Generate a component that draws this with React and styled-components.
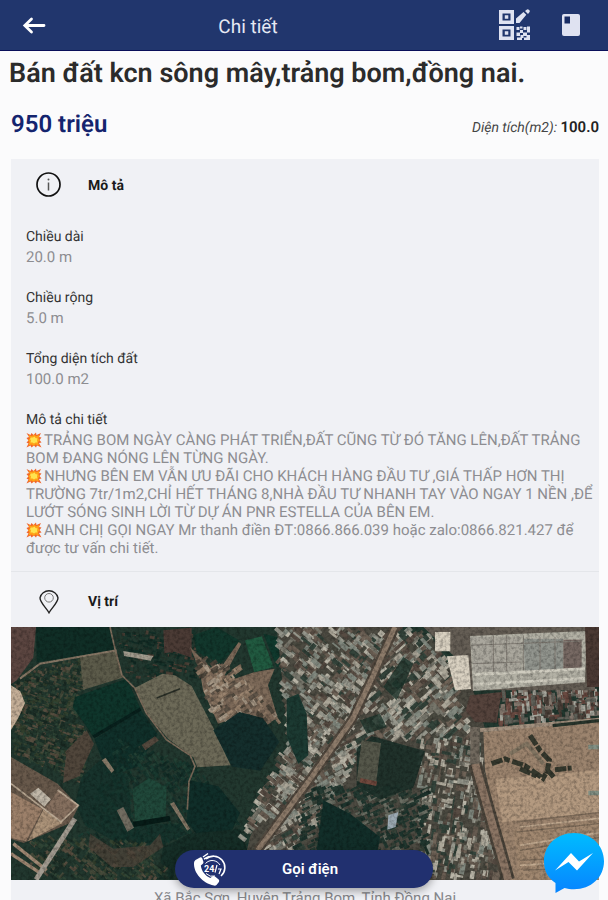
import React from "react";
import styled, { createGlobalStyle } from "styled-components";

const GlobalStyle = createGlobalStyle`
  body {
    margin: 0;
    background: #fbfbfc;
    font-family: Roboto, "Noto Sans", sans-serif;
    text-rendering: geometricPrecision;
  }
  * {
    box-sizing: border-box;
  }
`;

const Screen = styled.div`
  position: relative;
  height: 100vh;
  display: flex;
  flex-direction: column;
  overflow: hidden;
`;

const Header = styled.header`
  flex: none;
  height: 51px;
  padding: 0 20px;
  display: flex;
  align-items: center;
  justify-content: space-between;
  background: #21366d;
  border-bottom: 1px solid #0a0f5a;
`;

const HeaderSide = styled.div`
  flex: 1;
  display: flex;
  align-items: center;
  justify-content: ${props => (props.$end ? "flex-end" : "flex-start")};
  gap: 24px;
`;

const HeaderTitle = styled.h1`
  margin: 0;
  padding: 4px 112px 0 0;
  color: #e6e9f4;
  font-size: 19px;
  font-weight: 400;
  line-height: 24px;
`;

const IconButton = styled.button`
  display: flex;
  padding: 0;
  border: none;
  background: none;
  cursor: pointer;
`;

const Content = styled.main`
  flex: 1;
  min-height: 0;
  overflow-y: auto;
  padding: 4px 9px 0 11px;
  scrollbar-width: none;
`;

const Title = styled.h2`
  margin: 0 0 16px -2px;
  color: #2b2b2b;
  font-size: 27px;
  font-weight: 600;
  line-height: 36px;
`;

const Summary = styled.div`
  display: flex;
  align-items: center;
  justify-content: space-between;
  margin-bottom: 18px;
`;

const Price = styled.strong`
  color: #14246e;
  font-size: 24px;
  font-weight: 600;
  line-height: 34px;
`;

const Area = styled.span`
  padding-top: 6px;
  color: #444;
  font-size: 14px;
  font-style: italic;

  strong {
    color: #222;
    font-size: 15px;
    font-style: normal;
    font-weight: 600;
  }
`;

const Card = styled.section`
  background: #f0f1f5;
`;

const SectionHead = styled.div`
  display: flex;
  align-items: center;
  gap: 26px;
  height: ${props => (props.$divided ? 56 : 52)}px;
  padding: ${props => (props.$divided ? "2px 0 0 25px" : "0 0 0 25px")};
  border-top: ${props => (props.$divided ? "1px solid #e4e6ea" : "none")};
`;

const SectionName = styled.h3`
  margin: 0;
  padding-top: 2px;
  color: #1a1a1a;
  font-size: 14px;
  font-weight: 700;
`;

const Details = styled.dl`
  margin: 0;
  padding: 15px 4px 14px 15px;
`;

const Label = styled.dt`
  color: #333;
  font-size: 14px;
  line-height: 22px;
`;

const Value = styled.dd`
  margin: 0 0 21px;
  color: #8d8d91;
  font-size: 15px;
  line-height: 18px;

  &:last-child {
    margin-bottom: 0;
  }
`;

const Line = styled.p`
  margin: 0;
`;

const Emoji = styled.svg`
  width: 16px;
  height: 16px;
  margin-right: 2px;
  vertical-align: -3px;
`;

const MapImage = styled.svg`
  display: block;
  width: 100%;
  height: 253px;
`;

const Address = styled.p`
  margin: 0;
  padding: 9px 0 24px;
  color: #85868a;
  font-size: 15px;
  line-height: 18px;
  text-align: center;
`;

const CallButton = styled.button`
  position: absolute;
  left: 50%;
  bottom: 12px;
  width: 258px;
  height: 38px;
  transform: translateX(-50%);
  display: grid;
  grid-template-columns: 34px 1fr;
  align-items: center;
  padding: 0 39px 0 17px;
  border: none;
  border-radius: 19px;
  background: #21306f;
  color: #fff;
  font-family: inherit;
  font-size: 15px;
  font-weight: 600;
  box-shadow: 0 3px 8px rgba(0, 0, 0, 0.35);
  cursor: pointer;
`;

const ChatButton = styled(IconButton)`
  position: absolute;
  right: 4px;
  bottom: 6px;
`;

const BackIcon = () => (
  <svg width="28" height="24" viewBox="0 0 28 24" fill="none" stroke="#fff" strokeWidth="2.8" strokeLinecap="round">
    <path d="M24 12.500H5M11.500 6L4.800 12.500l6.700 6.500" />
  </svg>
);

const QrEditIcon = () => (
  <svg width="32" height="32" viewBox="0 0 32 32" fill="#dfe2f1">
    <path fillRule="evenodd" d="M0 1h15v14H0zM3.500 4.500v7h8v-7zM0 17h15v14H0zM3.500 20.500v7h8v-7z" />
    <path d="M5.800 6.300h3.500v3.500H5.800zM5.800 22.300h3.500v3.500H5.800z" />
    <path d="M17 12V9.500L24.500 3l2.800 2.800L20.500 14H17zM26 2l2-1.500q1-.5 1.800.2l.6.6q.8.8.2 1.800L29 5z" />
    <path d="M17.500 18h3v3h-3zM21 21h3v3h-3zM24.500 18h3v3h-3zM28 17.500h3v6h-3zM17.500 23.500h3.500v3.500h-3.500zM24 23.500h4v3.500h-4zM27.500 26h3.500v5h-6v-2.500h2.500zM18 28.500h5v2.500h-5zM21.500 26h3v3h-3zM21 17.500h2.500v2H21z" />
  </svg>
);

const BookIcon = () => (
  <svg width="33" height="24" viewBox="0 0 33 24">
    <rect x="7" y="1" width="18" height="22" rx="2" fill="#dfe2f1" />
    <rect x="9.500" y="3.500" width="5.500" height="7" fill="#182b63" />
  </svg>
);

const InfoIcon = () => (
  <svg width="26" height="26" viewBox="0 0 26 26" fill="none" stroke="#111">
    <circle cx="12.500" cy="12.500" r="11.500" strokeWidth="1.700" />
    <path d="M12.500 10.500v8" stroke="#555" strokeWidth="1.500" />
    <circle cx="12.500" cy="7.500" r="1" fill="#555" stroke="none" />
  </svg>
);

const PinIcon = () => (
  <svg width="26" height="26" viewBox="0 0 26 26" fill="none" stroke="#222">
    <path d="M13 24.800C10.500 20 4 14.800 4 9.800a9.200 8.800 0 0 1 18 0c0 5-6.500 10.200-9 15z" strokeWidth="1.400" />
    <circle cx="13" cy="9.800" r="4.300" stroke="#777" />
  </svg>
);

const Burst = () => (
  <Emoji viewBox="0 0 32 32" role="img" aria-label="💥">
    <path
      d="M1 2l8 4 2-4 4 4 5-5 1 5 9-4-4 8 5 1-4 5 4 5-5 1 5 9-9-4-2 4-4-4-5 4-2-4-8 4 4-8-4-2 4-4-4-5 5-2z"
      fill="#f0652a"
    />
    <path d="M5 6l7 2 4-3 4 3 7-2-2 7 3 4-4 3 2 7-7-2-4 3-4-3-6 2 2-7-3-4 4-3z" fill="#ffa016" />
    <path d="M10 11l4 0 3-2 2 3 4 1-1 4 1 4-4 0-3 2-3-2-4 0 1-4-2-3z" fill="#ffe34f" />
  </Emoji>
);

const PhoneIcon = () => (
  <svg width="34" height="34" viewBox="0 0 34 34" fill="none">
    <path
      d="M3.500 8L8 5.500q1.400-.6 2.200.7l1.200 3.600q.4 1.400-.8 2.300l-1.800 1.500c.7 5.600 4.500 10.500 9.500 12.300l2.300-1.600q1.300-.6 2.400.3l3.700 3q1 1.100.2 2.300l-2.400 3q-1 1-2.500.7C10.500 31 1.500 21 2 11q.1-2.200 1.500-3z"
      fill="#fff"
    />
    <path d="M11 5l5-3.500M12 7l5-2.500" stroke="#fff" strokeWidth="1.500" />
    <path d="M14 7A11 11 0 1 1 29 24" stroke="#fff" strokeWidth="1.600" />
    <path d="M13.500 11.500a9 9 0 0 1 14.500 1.500M14 21.500q4 4 9 2.500" stroke="#fff" strokeWidth="1" />
    <text x="12" y="20" fill="#fff" fontSize="9" fontWeight="700">24</text>
    <path d="M25 13l-2 7.500M26 17h3l-2 5" stroke="#fff" strokeWidth="1.200" />
  </svg>
);

const MessengerIcon = () => (
  <svg width="60" height="62" viewBox="0 0 60 62">
    <defs>
      <linearGradient id="chat" x1="0" y1="0" x2="0" y2="1">
        <stop offset="0" stopColor="#00bcff" />
        <stop offset="1" stopColor="#0784ff" />
      </linearGradient>
    </defs>
    <path d="M30 1C13 1 0 13 0 29.500c0 9.500 4 16.500 11.500 21.500v10l9-5c3 .9 6 1.300 9.500 1.300 17 0 30-11.800 30-28S47 1 30 1z" fill="url(#chat)" />
    <path d="M11 38.500L27 21l8 8.500L49 21 33 38.500l-8.500-8.500z" fill="#fff" />
  </svg>
);

// small seeded generator so the roofs land on the same spots each render
const seeded = seed => () => {
  seed = (seed * 16807) % 2147483647;
  return seed / 2147483647;
};

const roofColors = ["#95968b", "#77766b", "#aba698", "#665b50", "#82897f", "#b9b5a7", "#574c43", "#34443b", "#6f6357", "#4a4a40"];
const treeColors = ["#23382e", "#2f4435", "#564d3f", "#1c2e26", "#454a3a", "#34422f"];

// corners: top-left, top-right, bottom-right, bottom-left
const scatter = (seed, count, corners, angle, size, colors) => {
  const next = seeded(seed * 7919);
  const [a, b, c, d] = corners;
  return Array.from({ length: count }, () => {
    const u = next();
    const v = next();
    const mix = i => (a[i] * (1 - u) + b[i] * u) * (1 - v) + (d[i] * (1 - u) + c[i] * u) * v;
    return {
      x: mix(0),
      y: mix(1),
      w: size * (0.6 + next() * 1.6),
      h: size * (0.4 + next() * 0.5),
      turn: angle + (next() > 0.8 ? 90 : 0),
      fill: colors[Math.floor(next() * colors.length)]
    };
  });
};

const orchard = scatter(11, 900, [[50, 170], [250, 110], [250, 490], [45, 400]], 20, 11, treeColors);
const southTrees = scatter(29, 460, [[100, 650], [440, 670], [520, 775], [90, 775]], 40, 12, treeColors);
const centreTrees = scatter(31, 560, [[360, 360], [590, 440], [780, 690], [240, 650]], 55, 12, ["#1a3b31", "#143029", "#234034", "#17322c"]);
const northTrees = scatter(37, 260, [[350, 40], [580, 30], [650, 170], [390, 175]], 10, 11, ["#19342b", "#24372d", "#4b4036", "#122d26"]);

const village = scatter(3, 170, [[590, 110], [710, 140], [850, 310], [640, 310]], -35, 15, ["#8d7864", "#9a846f", "#756455", "#5f5448", "#a99a87", "#4d463b"]);

const roofs = [
  ...scatter(5, 560, [[830, 20], [1170, 20], [1070, 280], [870, 420]], 40, 18, roofColors),
  ...scatter(9, 340, [[860, 370], [1080, 280], [940, 480], [720, 660]], 38, 18, roofColors),
  ...scatter(13, 480, [[1190, 20], [1310, 60], [1420, 350], [1060, 350]], -42, 21, roofColors),
  ...scatter(17, 420, [[1260, 360], [1430, 350], [1510, 775], [1260, 775]], -80, 17, roofColors),
  ...scatter(19, 220, [[1510, 210], [1797, 200], [1797, 295], [1500, 315]], 86, 17, ["#81756b", "#493e37", "#a7a79d", "#6b4b42", "#5f6058"]),
  ...scatter(23, 260, [[1050, 350], [1130, 320], [900, 690], [770, 710]], -30, 18, roofColors),
  ...scatter(41, 420, [[930, 500], [1290, 500], [1280, 700], [880, 690]], -25, 14, ["#263a32", "#364238", "#696d62", "#1d332c", "#223830"])
];

const Patches = ({ items }) =>
  items.map((item, i) => (
    <rect
      key={i}
      x={item.x - item.w / 2}
      y={item.y - item.h / 2}
      width={item.w}
      height={item.h}
      fill={item.fill}
      transform={`rotate(${item.turn} ${item.x} ${item.y})`}
    />
  ));

const SatelliteMap = () => (
  <MapImage viewBox="33 20 1764 759" preserveAspectRatio="none" role="img" aria-label="Vị trí">
    <defs>
      <filter id="grain" x="0" y="0" width="100%" height="100%">
        <feTurbulence type="fractalNoise" baseFrequency="0.1" numOctaves="3" seed="4" />
        <feColorMatrix values="0 0 0 0 0  0 0 0 0 0  0 0 0 0 0  1.800 0 0 0 -0.700" />
      </filter>
    </defs>
    <rect x="33" y="20" width="1764" height="759" fill="#22382f" />

    {/* fields and woods to the west */}
    <Patches items={orchard} />
    <Patches items={northTrees} />
    <path d="M33 20h75l-8 92-50 68-17 12z" fill="#5c4641" />
    <path d="M108 20h222l15 70-235 36z" fill="#102e26" />
    <path d="M33 195l28 18 14 35-20 45-22 36z" fill="#c4ae97" />
    <path d="M200 390l60-60 22 40-45 98-48 20z" fill="#50463b" />
    <path d="M240 112l110-21 18 81-118 36z" fill="#5c5b4a" />
    <path d="M225 230l155-55 42 90-142 86-30-46-32-45z" fill="#0f352b" />
    <path d="M283 356l140-86 50 72-62 98-68 20-40-50z" fill="#10302a" />
    <path d="M280 350l142-84" stroke="#08211d" strokeWidth="10" />
    <path d="M490 30l85-8v90l-52-18-30 5z" fill="#4b3b35" />
    <path d="M580 45l70-25 70 42-58 68-72-36z" fill="#12372c" />
    <path d="M415 380l50-32 12 12-48 35z" fill="#54493e" />
    <Patches items={centreTrees} />
    <path d="M245 470l60-55 80 50 10 145 130 0 40 30-120 50-80-15-110-60-30-65z" fill="#12322b" opacity=".7" />
    <path d="M398 505l50-32 52 28-4 98-90 8z" fill="#20483a" />
    <path d="M400 612l110-18" stroke="#071c18" strokeWidth="16" />
    <path d="M350 570l20-10 32 62-20 12z" fill="#716c60" />
    <path d="M305 420l12-8 26 38-8 8zM510 550l12-5 48 80-8 6z" fill="#857866" />
    <path d="M570 480l85 18 65 80-25 55-105 10-30-40z" fill="#102e29" />
    <path d="M490 680l80-40 150-15 30 90-220 0-10 62h-50z" fill="#162e27" />

    {/* village paths and the big cleared field */}
    <path d="M570 80l60 60 20 20 66-95 8 6-50 94 30 10 60-20 60-10-20 50 30 100-30 10-60-25-90 30-45-100-10-60z" fill="#7d6a59" />
    <Patches items={village} />
    <path d="M735 60l50-12 36 92-58 16z" fill="#215a40" />
    <path d="M790 40l40 10 46 82-46 8z" fill="#10392d" />
    <path d="M405 202l82-42 38 5 50 32 65 125 52 113-100 6-12-30-75-55-60-70z" fill="#6d6a58" />
    <path d="M470 233l70-28" stroke="#2a2f27" strokeWidth="5" />
    <path d="M330 20l16 70 20 75 38 38 35 75 60 80 72 48 14 32-18 45-5 85" fill="none" stroke="#7d6c5b" strokeWidth="5" />
    <path d="M60 175l60-45 230-40" fill="none" stroke="#877765" strokeWidth="6" />
    <path d="M640 330l78-55 70 18 50 72-57 86-85-12z" fill="#142e2c" />
    <path d="M370 92l90 15-8 14-80-14z" fill="#a19b8d" />

    {/* south-west compound */}
    <Patches items={southTrees} />
    <path d="M270 640l70 45 110-10 30-35 10 40-90 60-65 0-70-60z" fill="#4c443a" opacity=".8" />
    <path d="M33 410l140 80 63 68-25 50-140 60-38-12z" fill="#68594b" />
    <path d="M33 515l95 52-50 96-45-10z" fill="#9c806a" />
    <path d="M130 568l58 40-104 55z" fill="#ad947a" />
    <path d="M175 510l62 45-52 50-52-35z" fill="#86705f" />
    <path d="M90 520l25-18 38 35-20 22z" fill="#c1b8a9" />
    <path d="M33 490l150 115 52-50-62-46" fill="none" stroke="#baa994" strokeWidth="5" />
    <path d="M33 700l90 60M40 670l100 80" stroke="#a08873" strokeWidth="10" />
    <path d="M225 595L108 778" stroke="#a39c91" strokeWidth="15" />

    {/* dense town */}
    <path d="M830 20h360l220 160 50 160 80 439H720l30-130 120-240z" fill="#4d4b42" />
    <Patches items={roofs} />
    <path d="M860 235l35-15 25 60 5 125-30 25-35-80z" fill="#1c3a32" />
    <path d="M1070 385l45-38 160 45-35 110-100 35-70-40z" fill="#1c3029" opacity=".9" />
    <path d="M1150 200l60-90 30 20-50 110zM1080 300l60-20 20 40-60 20z" fill="#1c332b" opacity=".8" />
    <path d="M1085 360l58 8-15 124-58-10z" fill="#55574a" />
    <path d="M1080 480l50 10" stroke="#70483d" strokeWidth="14" />
    <path d="M970 540l80 40 90 70-10 60-180-20z" fill="#122e29" />
    <path d="M1165 585l30-10-8 45-25 8z" fill="#9ba9b2" />
    <path d="M1185 20l-65 145-62 130-130 185-155 210" fill="none" stroke="#51483e" strokeWidth="28" />
    <path d="M1185 20l-65 145-62 130-130 185-155 210" fill="none" stroke="#8d7b6a" strokeWidth="15" />

    {/* factory */}
    <path d="M1270 20h515v190h-370l-40-90z" fill="#655e55" />
    <path d="M1305 35h46v58h-46zM1340 108l65-4 8 102-48 4z" fill="#d9d1c1" />
    <path d="M1410 47l350-15-5 154-336 26z" fill="#b3b1a5" />
    <path d="M1412 50h150v105h-140z" fill="#aaa79d" />
    <path d="M1570 55h120v95l-115 8z" fill="#92958e" />
    <path d="M1690 58h55v88h-55z" fill="#776963" />
    <path d="M1412 75l335-13M1418 130l145-5M1480 45v110M1520 45v110M1570 45v110M1620 50v100M1665 50v100" stroke="#827d75" strokeWidth="3" />
    <path d="M1420 163l335-18M1424 192l330-18" stroke="#cfccbf" strokeWidth="8" />
    <path d="M1755 20h42v180h-36z" fill="#4b3a34" />
    <path d="M1410 225l95-10-15 92-65-2-28-35z" fill="#55433c" />

    {/* cleared land to the east */}
    <path d="M1450 335l347-42v486h-270l-72-330z" fill="#9c846e" />
    <path d="M1485 475l312-25v125l-290 30z" fill="#b49a80" />
    <path d="M1540 630l257-30v179h-235z" fill="#a18870" />
    <path d="M1440 330l357-32" stroke="#a3917f" strokeWidth="12" />
    <path d="M1658 316l139-15" stroke="#28352c" strokeWidth="10" />
    <path
      d="M1475 430l40-14 60 20 54 38 14-24 18 20M1560 445l50 22M1590 345l30 45 28 30-8 40M1665 448l50-5"
      fill="none"
      stroke="#35382d"
      strokeWidth="15"
      strokeDasharray="34 5 18 8"
    />
    <path d="M1530 400l50-30 50 60" fill="none" stroke="#817461" strokeWidth="12" />
    <path d="M1550 605l247-28M1550 635l247-25M1560 690l237-38M1560 720l237-12M1570 750l200-10" stroke="#7d6b59" strokeWidth="4" />
    <path d="M1560 620l237-26M1560 675l237-38M1560 735l200-12" stroke="#c2aa90" strokeWidth="5" />
    <path d="M1765 380h32M1765 518h32" stroke="#829084" strokeWidth="14" />
    <path d="M1425 430l100 349" stroke="#4c453b" strokeWidth="40" />
    <path d="M1425 430l100 349" stroke="#8b7564" strokeWidth="24" />
    <path d="M1425 320v110" stroke="#71695e" strokeWidth="28" />

    <rect x="33" y="20" width="1764" height="759" filter="url(#grain)" opacity=".35" />
  </MapImage>
);

const measures = [
  { label: "Chiều dài", value: "20.0 m" },
  { label: "Chiều rộng", value: "5.0 m" },
  { label: "Tổng diện tích đất", value: "100.0 m2" }
];

const description = [
  "TRẢNG BOM NGÀY CÀNG PHÁT TRIỂN,ĐẤT CŨNG TỪ ĐÓ TĂNG LÊN,ĐẤT TRẢNG BOM ĐANG NÓNG LÊN TỪNG NGÀY.",
  "NHƯNG BÊN EM VẪN ƯU ĐÃI CHO KHÁCH HÀNG ĐẦU TƯ ,GIÁ THẤP HƠN THỊ TRƯỜNG 7tr/1m2,CHỈ HẾT THÁNG 8,NHÀ ĐẦU TƯ NHANH TAY VÀO NGAY 1 NỀN ,ĐỂ LƯỚT SÓNG SINH LỜI TỪ DỰ ÁN PNR ESTELLA CỦA BÊN EM.",
  "ANH CHỊ GỌI NGAY Mr thanh điền ĐT:0866.866.039 hoặc zalo:0866.821.427 để được tư vấn chi tiết."
];

const App = () => {
  return (
    <Screen>
      <GlobalStyle />
      <Header>
        <HeaderSide>
          <IconButton aria-label="Quay lại">
            <BackIcon />
          </IconButton>
        </HeaderSide>
        <HeaderTitle>Chi tiết</HeaderTitle>
        <HeaderSide $end>
          <IconButton aria-label="Mã QR">
            <QrEditIcon />
          </IconButton>
          <IconButton aria-label="Lưu tin">
            <BookIcon />
          </IconButton>
        </HeaderSide>
      </Header>
      <Content>
        <Title>Bán đất kcn sông mây,trảng bom,đồng nai.</Title>
        <Summary>
          <Price>950 triệu</Price>
          <Area>
            Diện tích(m2): <strong>100.0</strong>
          </Area>
        </Summary>
        <Card>
          <SectionHead>
            <InfoIcon />
            <SectionName>Mô tả</SectionName>
          </SectionHead>
          <Details>
            {measures.map(({ label, value }) => (
              <React.Fragment key={label}>
                <Label>{label}</Label>
                <Value>{value}</Value>
              </React.Fragment>
            ))}
            <Label>Mô tả chi tiết</Label>
            <Value>
              {description.map(text => (
                <Line key={text}>
                  <Burst />
                  {text}
                </Line>
              ))}
            </Value>
          </Details>
          <SectionHead $divided>
            <PinIcon />
            <SectionName>Vị trí</SectionName>
          </SectionHead>
          <SatelliteMap />
          <Address>Xã Bắc Sơn, Huyện Trảng Bom, Tỉnh Đồng Nai</Address>
        </Card>
      </Content>
      <CallButton>
        <PhoneIcon />
        <span>Gọi điện</span>
      </CallButton>
      <ChatButton aria-label="Messenger">
        <MessengerIcon />
      </ChatButton>
    </Screen>
  );
};

export default App;
